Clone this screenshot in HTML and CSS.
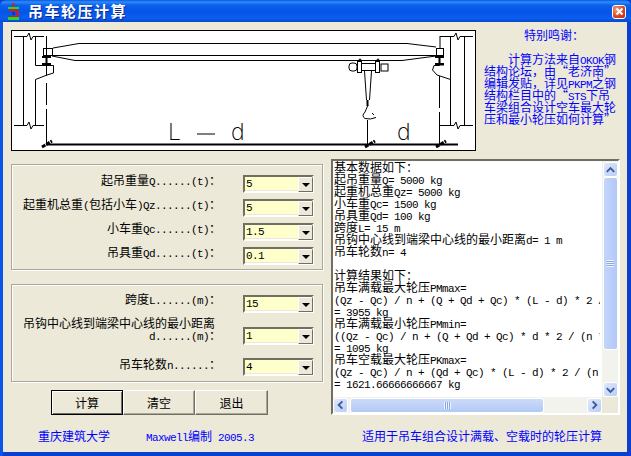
FILE: index.html
```html
<!DOCTYPE html>
<html lang="zh-CN">
<head>
<meta charset="utf-8">
<title>吊车轮压计算</title>
<link rel="stylesheet" href="styles.css">
</head>
<body>
<div class="window">
  <header class="titlebar">
    <svg class="appicon" viewBox="0 0 12 17" width="12" height="17">
      <path d="M5.500 0v5" stroke="#f01010" stroke-width="2" fill="none"/>
      <rect x="0" y="4" width="11" height="2" fill="#10e030"/>
      <path d="M1 7h5q4 0 4 3.500T6 14H1" stroke="#f01010" stroke-width="2" fill="none"/>
      <path d="M4 9h3v3H4z" fill="#2030b0"/>
      <rect x="0" y="14" width="11" height="3" fill="#10e030"/>
    </svg>
    <h1 class="apptitle">吊车轮压计算</h1>
    <button class="closebtn" aria-label="关闭">
      <svg viewBox="0 0 13 13" width="13" height="13"><path d="M3.500 3.500l6 6M9.500 3.500l-6 6" stroke="#fff" stroke-width="2" fill="none"/></svg>
    </button>
  </header>
  <main class="client">
    <section class="toprow">
      <div class="diagram">
        <svg viewBox="12 31 463 119" width="463" height="119">
          <g class="ln">
            <path d="M79 43.500H407L436 47M53 48L79 43.500"/>
            <path d="M52 55.500H436"/>
            <path d="M52 56L75 60.500H402L436 56"/>
            <rect x="43.500" y="48.500" width="9" height="7" />
            <rect x="436.500" y="48.500" width="7" height="7"/>
            <path d="M14 36.500H27L29 33L31 40L33 36.500H44M14 125.500H27L29 122L31 129L33 125.500H44"/>
            <path d="M23.500 36V125M35.500 36V65.500H46M46.500 36V75.500"/>
            <path d="M46 65.500H53.500V73L47 75L35.500 79.500V125"/>
            <path d="M46.500 83V105M46.500 109V144"/>
            <path d="M440 36.500H454L456 33L458 40L460 36.500H473M440 125.500H454L456 122L458 129L460 125.500H473"/>
            <path d="M450.500 36V125M464.500 36V125M440 36V48"/>
            <path d="M439.500 56V65.500H434L432.500 70L437 75L450.500 79.500"/>
            <path d="M439.500 76V108M439.500 112V144"/>
            <rect x="349" y="63" width="8" height="8" rx="3"/>
            <rect x="381" y="64" width="7" height="7"/>
            <rect x="357.500" y="61.500" width="4" height="11"/>
            <rect x="375.500" y="61.500" width="4" height="11"/>
            <rect x="361.500" y="63.500" width="14" height="7"/>
            <path d="M358 61q2-4 4 0M376 61q2-4 4 0"/>
            <path d="M364.500 71L366.500 100M371.500 71L369.500 100"/>
            <path d="M368 105L365 112Q361 116 365 118.500Q370 120 376 117.500"/>
            <path d="M367.500 120V144"/>
            <path d="M372 113L374 115"/>
          </g>
          <path class="thick" d="M46 144.500H458"/>
          <path class="thick" d="M367.500 100V106"/>
          <path class="solid" d="M42 56h9v2h-3.500v5h3.500v2.500h-9v-2.500h3.500v-5h-3.500z"/>
          <path class="solid" d="M435 56h9v2h-3.500v5h3.500v2.500h-9v-2.500h3.500v-5h-3.500z"/>
          <path class="tick" d="M42 147L52 141M365 147L375 141M436 147L446 141"/>
          <text class="dim" x="168" y="140">L</text>
          <rect class="solid" x="197" y="133.500" width="18" height="1"/>
          <text class="dim" x="231" y="140">d</text>
          <text class="dim" x="397" y="140">d</text>
        </svg>
      </div>
      <aside class="thanks">
        <h2 class="thanks-title">特别鸣谢&#xFF1A;</h2>
        <p class="thanks-body">计算方法来自<span class="l">OKOK</span>钢<br>结构论坛&#xFF0C;由&#x201C;老济南&#x201D;<br>编辑发贴&#xFF0C;详见<span class="l">PKPM</span>之钢<br>结构栏目中的&#x201C;<span class="l">STS</span>下吊<br>车梁组合设计空车最大轮<br>压和最小轮压如何计算&#x201D;</p>
      </aside>
    </section>
    <section class="mainrow">
      <div class="leftcol">
        <div class="group group-a">
          <div class="row">
            <label class="lab">起吊重量<span class="l">Q......(t)</span>&#xFF1A;</label>
            <div class="combo"><span class="val l">5</span><span class="drop"></span></div>
          </div>
          <div class="row">
            <label class="lab">起重机总重<span class="l">(</span>包括小车<span class="l">)Qz......(t)</span>&#xFF1A;</label>
            <div class="combo"><span class="val l">5</span><span class="drop"></span></div>
          </div>
          <div class="row">
            <label class="lab">小车重<span class="l">Qc......(t)</span>&#xFF1A;</label>
            <div class="combo"><span class="val l">1.5</span><span class="drop"></span></div>
          </div>
          <div class="row">
            <label class="lab">吊具重<span class="l">Qd......(t)</span>&#xFF1A;</label>
            <div class="combo"><span class="val l">0.1</span><span class="drop"></span></div>
          </div>
        </div>
        <div class="group group-b">
          <div class="row row-span">
            <label class="lab">跨度<span class="l">L......(m)</span>&#xFF1A;</label>
            <div class="combo"><span class="val l">15</span><span class="drop"></span></div>
          </div>
          <div class="row row-dist">
            <label class="lab lab-two"><span class="lab-first">吊钩中心线到端梁中心线的最小距离</span><span class="l">d......(m)</span>&#xFF1A;</label>
            <div class="combo"><span class="val l">1</span><span class="drop"></span></div>
          </div>
          <div class="row row-wheels">
            <label class="lab">吊车轮数<span class="l">n......</span>&#xFF1A;</label>
            <div class="combo"><span class="val l">4</span><span class="drop"></span></div>
          </div>
        </div>
        <div class="actions">
          <button class="btn btn-default">计算</button>
          <button class="btn">清空</button>
          <button class="btn btn-wide">退出</button>
        </div>
      </div>
      <div class="output">
        <div class="output-text"><div>基本数据如下&#xFF1A;</div>
<div>起吊重量<span class="l">Q= 5000 kg</span></div>
<div>起重机总重<span class="l">Qz= 5000 kg</span></div>
<div>小车重<span class="l">Qc= 1500 kg</span></div>
<div>吊具重<span class="l">Qd= 100 kg</span></div>
<div>跨度<span class="l">L= 15 m</span></div>
<div>吊钩中心线到端梁中心线的最小距离<span class="l">d= 1 m</span></div>
<div>吊车轮数<span class="l">n= 4</span></div>
<div>&nbsp;</div>
<div>计算结果如下&#xFF1A;</div>
<div>吊车满载最大轮压<span class="l">PMmax=</span></div>
<div><span class="l">(Qz - Qc) / n + (Q + Qd + Qc) * (L - d) * 2 / (n * L)</span></div>
<div><span class="l">= 3955 kg</span></div>
<div>吊车满载最小轮压<span class="l">PMmin=</span></div>
<div><span class="l">((Qz - Qc) / n + (Q + Qd + Qc) * d * 2 / (n * L)</span></div>
<div><span class="l">= 1095 kg</span></div>
<div>吊车空载最大轮压<span class="l">PKmax=</span></div>
<div><span class="l">(Qz - Qc) / n + (Qd + Qc) * (L - d) * 2 / (n * L)</span></div>
<div><span class="l">= 1621.66666666667 kg</span></div></div>
        <div class="vscroll">
          <span class="sb-btn"><svg viewBox="0 0 14 14" width="14" height="14"><path d="M3 9l4-4 4 4" class="chev"/></svg></span>
          <span class="sb-thumb-v"><i class="grip-v"></i></span>
          <span class="sb-track"></span>
          <span class="sb-btn"><svg viewBox="0 0 14 14" width="14" height="14"><path d="M3 5l4 4 4-4" class="chev"/></svg></span>
        </div>
        <div class="hscroll">
          <span class="sb-btn"><svg viewBox="0 0 14 14" width="14" height="14"><path d="M9 3L5 7l4 4" class="chev"/></svg></span>
          <span class="sb-thumb-h"><i class="grip-h"></i></span>
          <span class="sb-track"></span>
          <span class="sb-btn"><svg viewBox="0 0 14 14" width="14" height="14"><path d="M5 3l4 4-4 4" class="chev"/></svg></span>
        </div>
        <div class="corner"></div>
      </div>
    </section>
    <footer class="footer">
      <span class="f-school">重庆建筑大学</span>
      <span class="f-author"><span class="l">Maxwell</span>编制<span class="l"> 2005.3</span></span>
      <span class="f-note">适用于吊车组合设计满载、空载时的轮压计算</span>
    </footer>
  </main>
</div>
</body>
</html>
```
FILE: styles.css
```css
* { box-sizing: border-box; }
html, body { margin: 0; padding: 0; }
body {
  width: 631px;
  height: 456px;
  overflow: hidden;
  font: 12px/12px "Noto Sans CJK SC", sans-serif;
  color: #000;
  background: #0a3fd0;
}
.l {
  font: 11px/0 "Liberation Mono", monospace;
  letter-spacing: -0.6px;
  white-space: pre;
}
.window {
  width: 631px;
  height: 456px;
  display: flex;
  flex-direction: column;
  background: linear-gradient(90deg, #0a55e8 0 3px, #0a3fd0 3px);
  border-radius: 6px 6px 0 0;
  overflow: hidden;
}
.titlebar {
  height: 22px;
  flex: none;
  display: flex;
  align-items: center;
  padding: 0 5px 0 8px;
  background: linear-gradient(180deg, #0a58e0 0, #2f8cf8 2px, #0a62ee 5px, #0555e6 12px, #0a5ef0 18px, #0848c8 22px);
}
.appicon { flex: none; margin-top: 1px; }
.apptitle {
  margin: 0 0 0 8px;
  flex: 1;
  font: bold 15px/22px "Noto Sans CJK SC", sans-serif;
  letter-spacing: 1.5px;
  color: #fff;
  text-shadow: 1px 1px 0 #0a2a90;
}
.closebtn {
  width: 14px;
  height: 14px;
  padding: 0;
  display: flex;
  border: 1px solid #fff;
  border-radius: 3px;
  background: radial-gradient(circle at 30% 30%, #f0a080, #d8421c 60%, #b83010);
  margin-top: 1px;
}
.closebtn svg { margin: -0.5px; }
.client {
  flex: none;
  width: 624px;
  height: 430px;
  margin-left: 3px;
  padding: 8px 0 0 8px;
  background: #ece9d8;
}
.toprow { display: flex; height: 121px; }
.diagram {
  width: 465px;
  height: 121px;
  flex: none;
  border: 1px solid #000;
  background: #fff;
}
.diagram svg { display: block; }
.ln { fill: none; stroke: #000; stroke-width: 1; }
.thick { fill: none; stroke: #000; stroke-width: 2; }
.tick { fill: none; stroke: #000; stroke-width: 3; stroke-dasharray: 4 1; }
.solid { fill: #000; }
.dim {
  font: 200 23px "Inter", "DejaVu Sans", sans-serif;
  fill: #000;
}
.thanks { width: 144px; margin-left: 8px; color: #0000ff; }
.thanks-title {
  margin: -1px 0 0;
  font: 12px/12px "Noto Sans CJK SC", sans-serif;
  text-align: center;
  width: 140px;
  height: 24px;
}
.thanks-body {
  margin: 0;
  text-indent: 24px;
  white-space: nowrap;
}
.mainrow { display: flex; margin-top: 8px; height: 256px; }
.leftcol { width: 312px; flex: none; padding-top: 5px; }
.group {
  border: 1px solid #aca899;
  box-shadow: inset 1px 1px 0 #fff, 1px 1px 0 #fff;
  padding-right: 8px;
}
.group-a { height: 106px; padding-top: 7px; }
.group-b { height: 98px; margin-top: 14px; padding-top: 10px; }
.row {
  display: flex;
  height: 24px;
  align-items: center;
  justify-content: flex-end;
}
.row-span { height: 32px; align-items: flex-start; }
.row-dist { height: 31px; align-items: flex-start; }
.row-wheels { height: 18px; align-items: flex-start; }
.lab {
  flex: none;
  width: 220px;
  margin-right: 22px;
  text-align: right;
  margin-bottom: 8px;
  white-space: nowrap;
}
.row-span .lab { margin-bottom: 0; margin-top: -2px; }
.row-wheels .lab { margin-bottom: 0; }
.row-dist .lab { margin-bottom: 0; margin-top: -10px; }
.lab-first { display: block; margin-right: 6px; }
.combo {
  flex: none;
  width: 71px;
  height: 18px;
  display: flex;
  align-items: center;
  padding-left: 1px;
  background: #ffffcc;
  border: 2px solid;
  border-color: #716f64 #fff #fff #716f64;
  box-shadow: inset -1px -1px 0 #ece9d8;
}
.val { flex: 1; line-height: 14px; }
.drop {
  flex: none;
  width: 15px;
  height: 15px;
  margin-right: -1px;
  position: relative;
  background: #ece9d8;
  border: 1px solid;
  border-color: #fff #716f64 #716f64 #fff;
}
.drop::after {
  content: "";
  position: absolute;
  left: 3px;
  top: 5px;
  border: 4px solid transparent;
  border-top-color: #000;
  border-bottom-width: 0;
}
.actions { display: flex; margin: 8px 0 0 40px; }
.btn {
  width: 72px;
  height: 25px;
  padding: 0;
  font: 12px/12px "Noto Sans CJK SC", sans-serif;
  color: #000;
  background: #ece9d8;
  border: 1px solid;
  border-color: #fff #716f64 #716f64 #fff;
  box-shadow: inset -1px -1px 0 #aca899;
}
.btn-default {
  border: 1px solid #000;
  box-shadow: inset 1px 1px 0 #fff, inset -1px -1px 0 #716f64;
}
.btn-wide { width: 73px; }
.output {
  width: 289px;
  height: 256px;
  margin-left: 8px;
  flex: none;
  display: grid;
  grid-template-columns: 269px 16px;
  grid-template-rows: 236px 16px;
  background: #fff;
  border: 2px solid;
  border-color: #716f64 #fff #fff #716f64;
}
.output-text {
  width: 267px;
  padding: 0 0 0 1px;
  overflow: hidden;
  white-space: nowrap;
  background: #fff;
}
.output-text div { height: 12px; }
.vscroll {
  display: flex;
  flex-direction: column;
  align-items: center;
  background: #f3f3ee;
  padding: 1px 0 0;
}
.hscroll {
  display: flex;
  align-items: center;
  background: #f3f3ee;
}
.corner { background: #ece9d8; }
.sb-track { flex: 1; }
.sb-btn {
  flex: none;
  width: 15px;
  height: 15px;
  display: flex;
  align-items: center;
  justify-content: center;
  border: 1px solid #fff;
  border-radius: 3px;
  background: linear-gradient(135deg, #dfe8fc, #b8cdf8);
}
.chev { fill: none; stroke: #3a5a98; stroke-width: 2; }
.sb-thumb-v {
  flex: none;
  width: 15px;
  height: 173px;
  display: flex;
  align-items: center;
  justify-content: center;
  border: 1px solid #fff;
  border-radius: 3px;
  background: linear-gradient(90deg, #c4d5fb, #b2c8f6);
}
.sb-thumb-h {
  flex: none;
  width: 194px;
  height: 15px;
  margin-left: 2px;
  display: flex;
  align-items: center;
  justify-content: center;
  border: 1px solid #fff;
  border-radius: 3px;
  background: linear-gradient(180deg, #ccdbf9, #b2c8f6);
}
.grip-v {
  width: 7px;
  height: 7px;
  background: repeating-linear-gradient(180deg, #eef3fe 0 1px, #8da8e0 1px 2px);
}
.grip-h {
  width: 7px;
  height: 7px;
  background: repeating-linear-gradient(90deg, #eef3fe 0 1px, #8da8e0 1px 2px);
}
.footer {
  display: flex;
  margin-top: 15px;
  padding-left: 27px;
  color: #0000ff;
  white-space: nowrap;
}
.f-school { width: 108px; }
.f-author { width: 216px; }
```
